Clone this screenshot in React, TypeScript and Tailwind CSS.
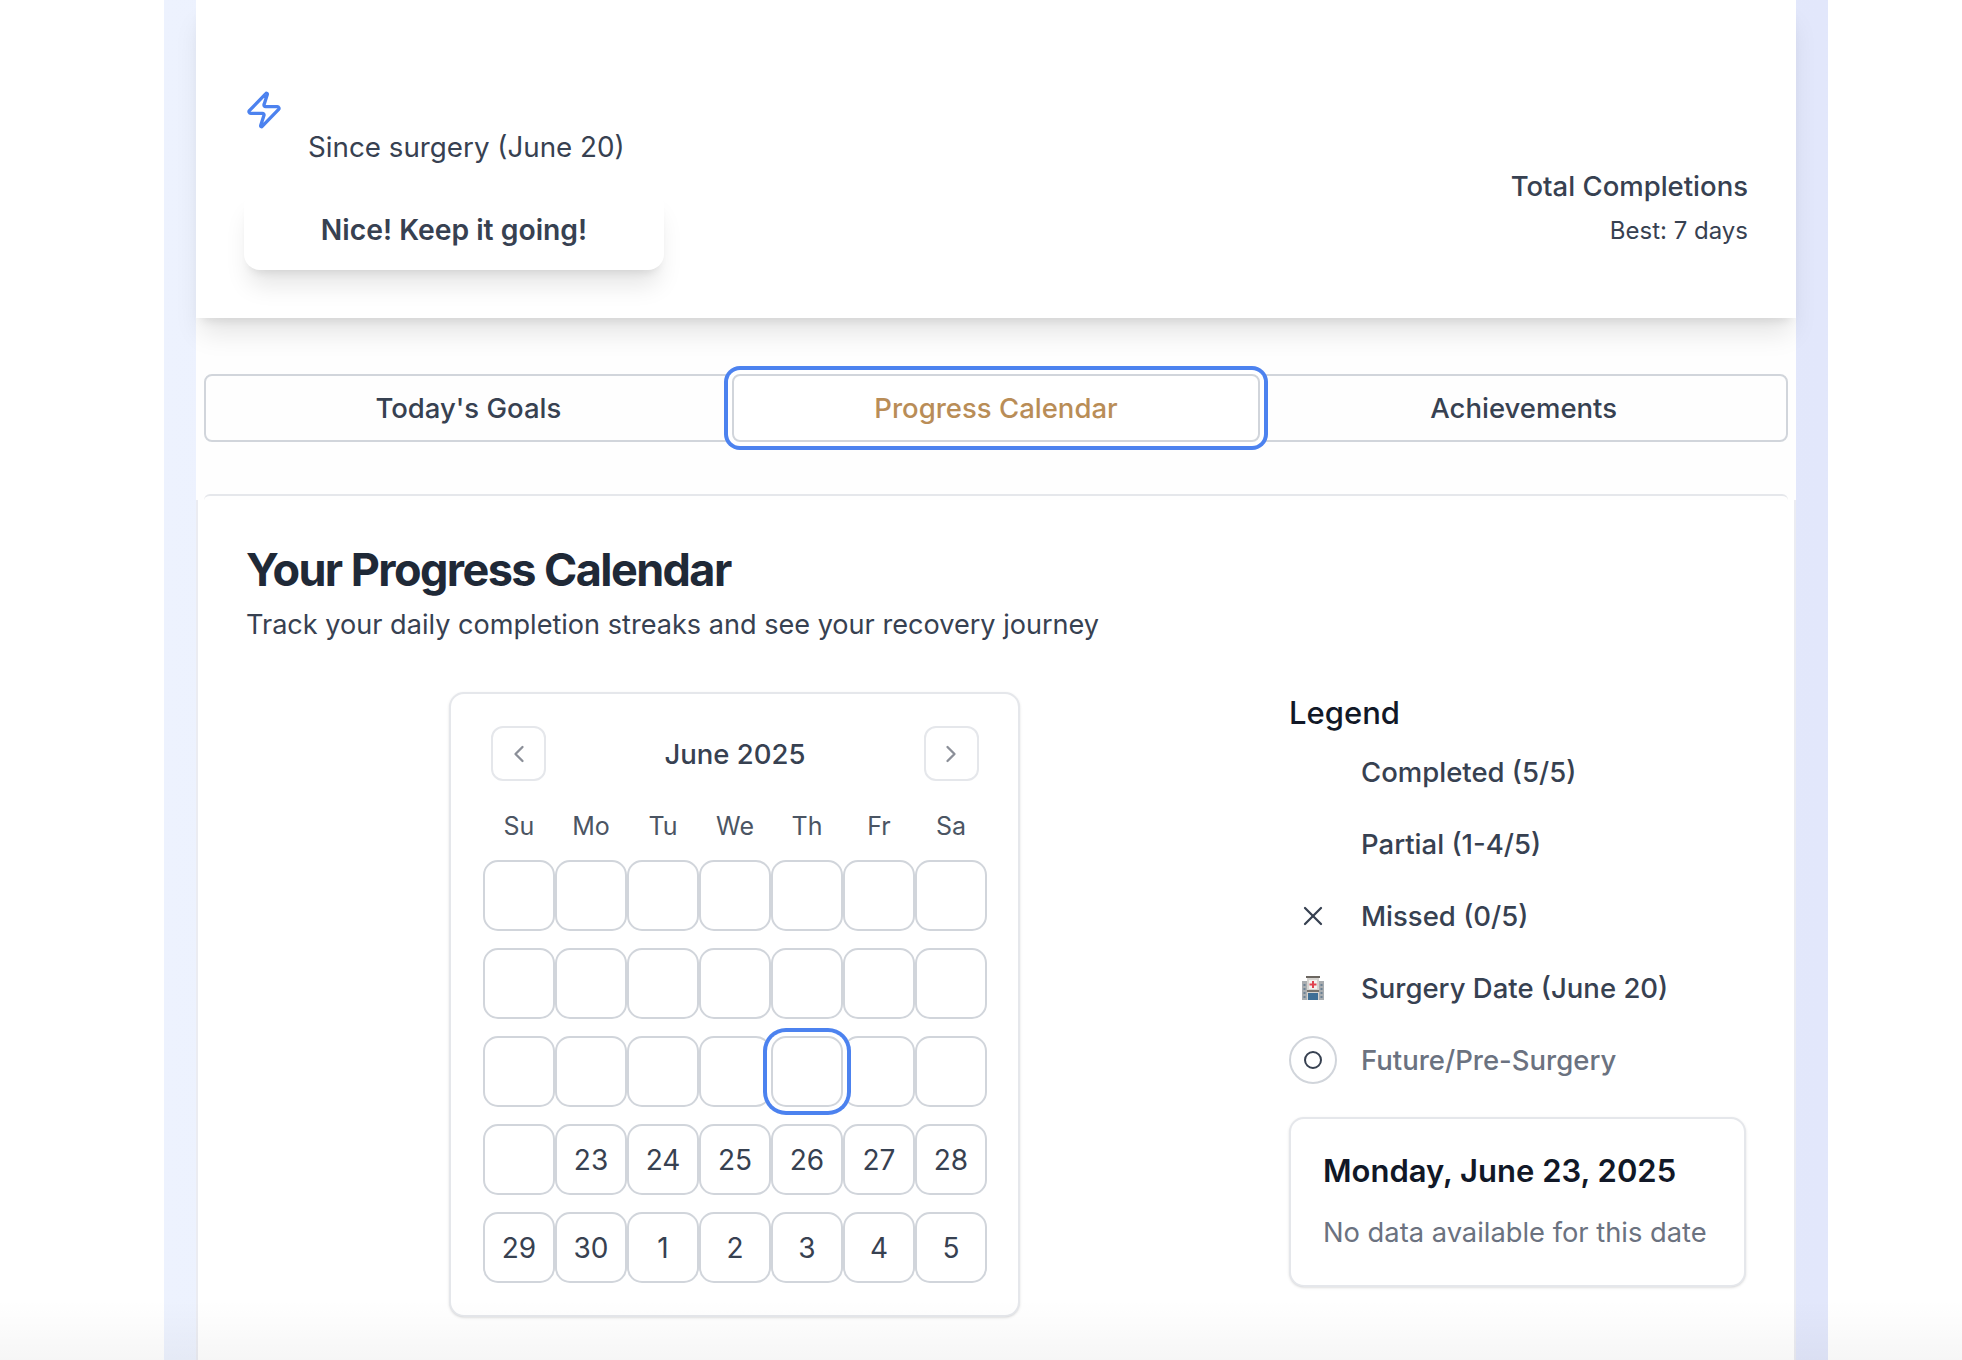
import { ChevronLeft, ChevronRight, X, Zap } from "lucide-react";

const days = ["Su", "Mo", "Tu", "We", "Th", "Fr", "Sa"];
const cells: string[] = [
  ...Array(22).fill(""),
  "23", "24", "25", "26", "27", "28", "29", "30", "1", "2", "3", "4", "5",
];

function Hospital() {
  return (
    <svg width="22" height="24" viewBox="0 0 22 24">
      <rect x="4" y="0" width="14" height="2" fill="#6b6660" />
      <rect x="0" y="5" width="22" height="19" fill="#a9adb0" />
      <rect x="5" y="2" width="12" height="22" fill="#d6d4d0" />
      <rect x="7" y="4" width="8" height="9" fill="#f3f1ee" />
      <path d="M10 5h2v2.500h2.500v2H12V12h-2V9.500H7.500v-2H10z" fill="#e0434f" />
      <rect x="5" y="14" width="12" height="2" fill="#77736d" />
      <rect x="6" y="17" width="10" height="7" fill="#3f6f96" />
      <g fill="#6d8294">
        <rect x="1.500" y="8" width="2" height="2" />
        <rect x="1.500" y="12" width="2" height="2" />
        <rect x="1.500" y="16" width="2" height="2" />
        <rect x="1.500" y="20" width="2" height="2" />
        <rect x="18.500" y="8" width="2" height="2" />
        <rect x="18.500" y="12" width="2" height="2" />
        <rect x="18.500" y="16" width="2" height="2" />
        <rect x="18.500" y="20" width="2" height="2" />
      </g>
    </svg>
  );
}

function LegendRow({ icon, label, muted }: { icon?: React.ReactNode; label: string; muted?: boolean }) {
  return (
    <div className="flex h-12 items-center gap-6">
      <div className="flex size-12 items-center justify-center">{icon}</div>
      <span className={`pt-[2px] text-[27.5px] font-medium ${muted ? "text-[#6b7280]" : "text-[#374151]"}`}>{label}</span>
    </div>
  );
}

export default function App() {
  return (
    <div className="relative h-[1360px] overflow-hidden bg-white font-['Inter',sans-serif]">
      <div className="mx-[164px] h-full w-[1664px] bg-gradient-to-r from-[#edf2fe] to-[#e2e7fb] px-8">
        <div className="h-full bg-[#fefefe]">
          <header className="relative flex h-[318px] justify-between bg-white px-12 shadow-[0_20px_25px_-5px_rgba(0,0,0,0.1),0_8px_10px_-6px_rgba(0,0,0,0.1)]">
            <div className="pt-[90px]">
              <Zap size={40} strokeWidth={2} className="text-[#4c82ef]" />
              <p className="ml-16 mt-[2px] text-[27.75px] leading-[30px] text-[#374151]">Since surgery (June 20)</p>
              <div className="mt-[28px] flex h-20 w-[420px] items-end justify-center rounded-2xl bg-white pb-[24px] shadow-[0_20px_25px_-5px_rgba(0,0,0,0.1),0_8px_10px_-6px_rgba(0,0,0,0.1)]">
                <span className="text-[28.3px] font-semibold leading-8 text-[#374151]">Nice! Keep it going!</span>
              </div>
            </div>
            <div className="flex flex-col items-end pt-[170px]">
              <span className="text-[27.5px] font-medium leading-8 text-[#374151]">Total Completions</span>
              <span className="mt-[15px] text-[24px] leading-7 text-[#374151]">Best: 7 days</span>
            </div>
          </header>

          <div className="mx-2 mt-14 grid h-[68px] grid-cols-3 rounded-lg border-2 border-[#d1d5db] text-[27.5px] font-medium text-[#374151]">
            <div className="flex items-center justify-center pr-[2px] pt-[2px]">Today's Goals</div>
            <div className="z-10 -mx-[1px] -my-[2px] flex items-center justify-center rounded-lg border-2 border-[#d1d5db] bg-white pt-[2px] text-[#b98d57] ring-4 ring-[#4c82ef] ring-offset-4 ring-offset-white">
              Progress Calendar
            </div>
            <div className="flex items-center justify-center pl-[2px] pt-[2px]">Achievements</div>
          </div>

          <div className="mx-2 mt-[52px] h-[6px] rounded-t-xl border-t-2 border-[#e5e7eb]" />

          <main className="h-[860px] border-x-2 border-[#ebecf2] bg-white px-[48px] pt-[47px]">
            <h1 className="text-[45px] font-bold leading-[46px] tracking-[-0.035em] text-[#1f2937]">Your Progress Calendar</h1>
            <p className="mt-4 text-[27.1px] leading-8 text-[#374151]">Track your daily completion streaks and see your recovery journey</p>

            <div className="mt-[51px] grid grid-cols-[976px_457px] gap-[67px]">
              <div className="pl-[203px]">
                <section className="h-[625px] w-[571px] rounded-[15px] border-2 border-[#e5e7eb] bg-white pb-[30px] pl-8 pr-[31px] pt-8 shadow-sm">
                  <div className="ml-2 flex h-[55px] w-[488px] items-center justify-between">
                    <button className="flex size-[55px] items-center justify-center rounded-[12px] border-2 border-[#e5e7eb] text-[#8b8f98]">
                      <ChevronLeft size={28} />
                    </button>
                    <span className="pt-[2px] text-[27.5px] font-medium text-[#374151]">June 2025</span>
                    <button className="flex size-[55px] items-center justify-center rounded-[12px] border-2 border-[#e5e7eb] text-[#8b8f98]">
                      <ChevronRight size={28} />
                    </button>
                  </div>
                  <div className="mt-[29px] grid grid-cols-7">
                    {days.map((d) => (
                      <div key={d} className="text-center text-[25px] leading-8 text-[#4b5563]">{d}</div>
                    ))}
                  </div>
                  <div className="mt-[18px] grid grid-cols-7 gap-y-[17px]">
                    {cells.map((c, i) => (
                      <div
                        key={i}
                        className={
                          i === 18
                            ? "relative z-10 flex h-[71px] items-center justify-center rounded-[15px] border-2 border-[#d1d5db] bg-white ring-4 ring-[#4c82ef] ring-offset-4 ring-offset-white"
                            : "flex h-[71px] items-center justify-center rounded-[15px] border-2 border-[#d1d5db] text-[28px] text-[#374151]"
                        }
                      >
                        {c}
                      </div>
                    ))}
                  </div>
                </section>
              </div>

              <aside className="pt-[1px]">
                <h2 className="text-[31px] font-medium leading-10 text-[#111827]">Legend</h2>
                <div className="mt-[15px] flex flex-col gap-6">
                  <LegendRow label="Completed (5/5)" />
                  <LegendRow label="Partial (1-4/5)" />
                  <LegendRow label="Missed (0/5)" icon={<X size={32} strokeWidth={1.7} className="text-[#374151]" />} />
                  <LegendRow label="Surgery Date (June 20)" icon={<Hospital />} />
                  <LegendRow
                    label="Future/Pre-Surgery"
                    muted
                    icon={
                      <div className="flex size-12 items-center justify-center rounded-full border-2 border-[#d1d5db]">
                        <div className="size-[18px] rounded-full border-[2.5px] border-[#374151]" />
                      </div>
                    }
                  />
                </div>
                <div className="mt-[33px] h-[170px] rounded-[15px] border-2 border-[#e5e7eb] bg-white px-[32px] pt-[32px] shadow-sm">
                  <h3 className="text-[31px] font-semibold leading-10 text-[#111827]">Monday, June 23, 2025</h3>
                  <p className="mt-[26px] text-[27.3px] leading-8 text-[#6b7280]">No data available for this date</p>
                </div>
              </aside>
            </div>
          </main>
        </div>
      </div>
      <div className="pointer-events-none absolute inset-x-0 bottom-0 h-[60px] bg-gradient-to-b from-transparent to-black/[0.035]" />
    </div>
  );
}
